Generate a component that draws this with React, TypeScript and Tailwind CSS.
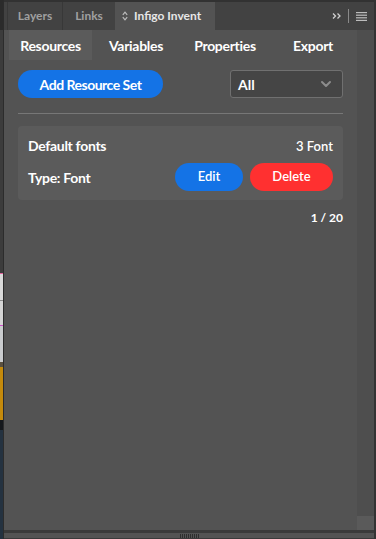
import { ChevronDown } from 'lucide-react';

const font = { fontFamily: 'Lato, "Noto Sans", sans-serif' };

function CanvasStrip() {
  // slice of the document canvas showing behind the panel
  return (
    <div className="flex w-[3px] shrink-0 flex-col">
      <div className="h-[30px] bg-[#2b2b2b]" />
      <div className="h-[243px] bg-[#3c3c3c]" />
      <div className="h-[1px] bg-[#e0609a]" />
      <div className="h-[26px] bg-[#d9d9d9]" />
      <div className="h-[1px] bg-[#8a8a8a]" />
      <div className="h-[24px] bg-[#d4d4d4]" />
      <div className="h-[1px] bg-[#d050c8]" />
      <div className="h-[36px] bg-[#c9cbcd]" />
      <div className="h-[5px] bg-[#5a5040]" />
      <div className="h-[53px] bg-[#c48a0c]" />
      <div className="h-[10px] bg-[#15181c]" />
      <div className="flex-1 bg-[#243240]" />
    </div>
  );
}

function TabBar() {
  return (
    <div className="flex h-[30px] shrink-0 items-end bg-[#323232] text-[12px] font-bold">
      <div className="flex h-[28px] flex-1 items-stretch bg-[#424242]">
        <div className="flex w-[4px] border-r border-[#383838]" />
        <div className="flex w-[55px] items-center justify-center border-r border-[#383838] text-[#a0a0a0]">
          Layers
        </div>
        <div className="flex w-[52px] items-center justify-center text-[#a0a0a0]">Links</div>
        <div className="flex w-[100px] items-center gap-[6px] bg-[#535353] pl-[7px] text-[#e6e6e6]">
          <svg width="6" height="10" viewBox="0 0 6 10" fill="none" stroke="#bdbdbd" strokeWidth="1.2">
            <path d="M0.8 3.8 L3 1.2 L5.2 3.8" />
            <path d="M0.8 6.2 L3 8.8 L5.2 6.2" />
          </svg>
          Infigo Invent
        </div>
        <div className="flex flex-1 items-center justify-end gap-[7px] pr-[7px]">
          <svg width="9" height="8" viewBox="0 0 9 8" fill="none" stroke="#cfcfcf" strokeWidth="1.3">
            <path d="M1 1.5 L3.5 4 L1 6.5" />
            <path d="M5.5 1.5 L8 4 L5.5 6.5" />
          </svg>
          <div className="h-[14px] w-[1px] bg-[#8a8a8a]" />
          <svg width="11" height="9" viewBox="0 0 11 9" fill="#bdbdbd">
            <rect x="0" y="0" width="11" height="1.2" />
            <rect x="0" y="2.6" width="11" height="1.2" />
            <rect x="0" y="5.2" width="11" height="1.2" />
            <rect x="0" y="7.8" width="11" height="1.2" />
          </svg>
        </div>
      </div>
    </div>
  );
}

function SubTabs() {
  const tabs = [
    { name: 'Resources', w: 'w-[83px]', active: true },
    { name: 'Variables', w: 'w-[88px]' },
    { name: 'Properties', w: 'w-[90px]' },
    { name: 'Export', w: 'w-[86px]' },
  ];
  return (
    <div className="flex h-[30px] shrink-0 pl-[5px] text-[14px] font-bold tracking-[-0.3px] text-white">
      {tabs.map((t) => (
        <div
          key={t.name}
          className={`flex ${t.w} items-center justify-center ${t.active ? 'bg-[#5b5b5b]' : ''}`}
        >
          {t.name}
        </div>
      ))}
    </div>
  );
}

export default function App() {
  return (
    <div className="flex h-[539px] w-[376px] bg-[#333333]" style={font}>
      <CanvasStrip />
      <div className="flex w-[371px] flex-col border-l border-[#2c2c2c] bg-[#535353]">
        <TabBar />
        <div className="flex flex-1">
          <div className="flex flex-1 flex-col">
            <SubTabs />
            <div className="flex flex-col px-[14px] pt-[10px]">
              <div className="flex items-center justify-between">
                <button className="flex h-[28px] w-[145px] items-center justify-center rounded-full bg-[#1473e6] text-[14px] font-bold tracking-[-0.5px] text-white">
                  Add Resource Set
                </button>
                <div className="flex h-[28px] w-[113px] items-center justify-between rounded-[3px] border border-[#707070] bg-[#454545] pl-[7px] pr-[8px] text-[14px] font-bold text-white">
                  All
                  <ChevronDown size={16} strokeWidth={3} color="#8c8c8c" />
                </div>
              </div>
              <div className="mt-[15px] h-[1px] bg-[#777777]" />
              <div className="mt-[12px] flex flex-col gap-[8px] rounded-[4px] bg-[#5b5b5b] px-[10px] pb-[9px] pt-[9px] text-white">
                <div className="flex h-[20px] items-center justify-between">
                  <span className="text-[14px] font-bold tracking-[-0.3px]">Default fonts</span>
                  <span className="pt-[3px] text-[13px] font-semibold">3 Font</span>
                </div>
                <div className="flex h-[28px] items-center justify-between">
                  <span className="text-[14px] font-bold tracking-[-0.3px]">Type: Font</span>
                  <div className="flex gap-[7px]">
                    <button className="flex h-[28px] w-[68px] items-center justify-center rounded-full bg-[#1473e6] text-[13px] font-semibold text-white">
                      Edit
                    </button>
                    <button className="flex h-[28px] w-[83px] items-center justify-center rounded-full bg-[#ff3030] text-[13px] font-semibold text-white">
                      Delete
                    </button>
                  </div>
                </div>
              </div>
              <div className="mt-[10px] text-right text-[12px] font-bold leading-[16px] text-white">1 / 20</div>
            </div>
          </div>
          <div className="flex w-[17px] flex-col bg-[#4e4e4e]">
            <div className="flex-1" />
            <div className="h-[14px] bg-[#5a5a5a]" />
          </div>
        </div>
        <div className="flex h-[9px] shrink-0 flex-col">
          <div className="h-[3px] bg-[#3a3a3a]" />
          <div className="flex flex-1 items-center justify-center gap-[1px] bg-[#535353]">
            {Array.from({ length: 10 }).map((_, i) => (
              <div key={i} className="h-[4px] w-[1px] bg-[#2e2e2e]" />
            ))}
          </div>
          <div className="h-[1px] bg-[#3a3a3a]" />
        </div>
      </div>
    </div>
  );
}
